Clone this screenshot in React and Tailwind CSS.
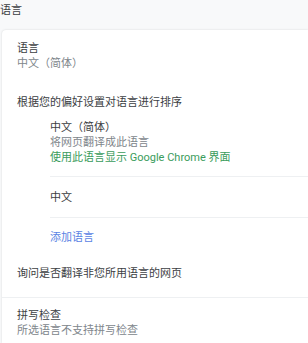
export default function App() {
  const font = { fontFamily: '"Roboto", "Noto Sans CJK SC", sans-serif' };
  return (
    <div className="w-[308px] h-[343px] overflow-hidden bg-[#f8f9fa] text-[11px] leading-[15px] text-[#3c4043]" style={font}>
      <div className="h-[30px] pt-[3px] pl-0">语言</div>
      <div className="ml-[2px] bg-white rounded-tl-[4px] shadow-[0_0_2px_rgba(60,64,67,0.2)] h-[313px]">
        <div className="pt-[11px] pl-[15px]">
          <div>语言</div>
          <div className="text-[#80868b]">中文（简体）</div>
        </div>
        <div className="pt-[24px] pl-[15px]">根据您的偏好设置对语言进行排序</div>
        <div className="pl-[48px] pt-[10px]">
          <div className="pb-[11px] border-b border-[#eef0f2]">
            <div>中文（简体）</div>
            <div className="text-[#80868b]">将网页翻译成此语言</div>
            <div className="text-[#3a9c5c]">使用此语言显示 Google Chrome 界面</div>
          </div>
          <div className="h-[41px] flex items-center border-b border-[#eef0f2]">中文</div>
          <div className="h-[38px] flex items-center text-[#5a83e4]">添加语言</div>
        </div>
        <div className="pt-[10px] pb-[16px] pl-[15px] border-b border-[#eef0f2]">询问是否翻译非您所用语言的网页</div>
        <div className="pt-[10px] pl-[15px]">
          <div>拼写检查</div>
          <div className="text-[#80868b]">所选语言不支持拼写检查</div>
        </div>
      </div>
    </div>
  );
}
